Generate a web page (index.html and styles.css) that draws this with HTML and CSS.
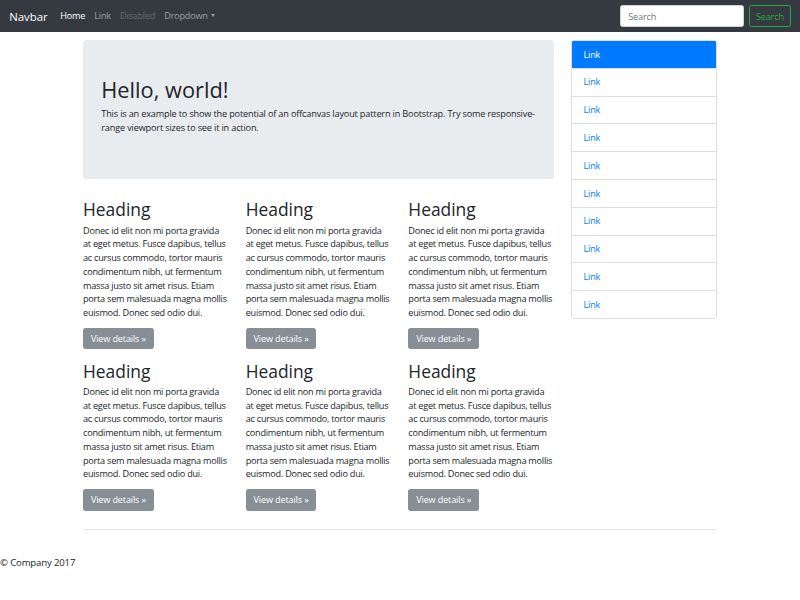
FILE: index.html
```html
<!DOCTYPE html>
<html lang="en">
<head>
<meta charset="utf-8">
<title>Off Canvas Template</title>
<link rel="stylesheet" href="styles.css">
</head>
<body>
<nav class="navbar">
  <a class="brand" href="#">Navbar</a>
  <ul class="nav">
    <li><a class="nav-link active" href="#">Home</a></li>
    <li><a class="nav-link" href="#">Link</a></li>
    <li><a class="nav-link disabled" href="#">Disabled</a></li>
    <li><a class="nav-link dropdown" href="#">Dropdown<span class="caret"></span></a></li>
  </ul>
  <form class="search">
    <input class="search-input" type="text" placeholder="Search">
    <button class="search-btn" type="button">Search</button>
  </form>
</nav>

<div class="container">
  <div class="row">
    <div class="main">
      <div class="jumbotron">
        <h1>Hello, world!</h1>
        <p>This is an example to show the potential of an offcanvas layout pattern in Bootstrap. Try some responsive-range viewport sizes to see it in action.</p>
      </div>
      <div class="cards">
        <div class="card"><h2>Heading</h2><p class="text">Donec id elit non mi porta gravida at eget metus. Fusce dapibus, tellus ac cursus commodo, tortor mauris condimentum nibh, ut fermentum massa justo sit amet risus. Etiam porta sem malesuada magna mollis euismod. Donec sed odio dui.</p><p class="action"><a class="btn" href="#">View details &raquo;</a></p></div>
        <div class="card"><h2>Heading</h2><p class="text">Donec id elit non mi porta gravida at eget metus. Fusce dapibus, tellus ac cursus commodo, tortor mauris condimentum nibh, ut fermentum massa justo sit amet risus. Etiam porta sem malesuada magna mollis euismod. Donec sed odio dui.</p><p class="action"><a class="btn" href="#">View details &raquo;</a></p></div>
        <div class="card"><h2>Heading</h2><p class="text">Donec id elit non mi porta gravida at eget metus. Fusce dapibus, tellus ac cursus commodo, tortor mauris condimentum nibh, ut fermentum massa justo sit amet risus. Etiam porta sem malesuada magna mollis euismod. Donec sed odio dui.</p><p class="action"><a class="btn" href="#">View details &raquo;</a></p></div>
        <div class="card"><h2>Heading</h2><p class="text">Donec id elit non mi porta gravida at eget metus. Fusce dapibus, tellus ac cursus commodo, tortor mauris condimentum nibh, ut fermentum massa justo sit amet risus. Etiam porta sem malesuada magna mollis euismod. Donec sed odio dui.</p><p class="action"><a class="btn" href="#">View details &raquo;</a></p></div>
        <div class="card"><h2>Heading</h2><p class="text">Donec id elit non mi porta gravida at eget metus. Fusce dapibus, tellus ac cursus commodo, tortor mauris condimentum nibh, ut fermentum massa justo sit amet risus. Etiam porta sem malesuada magna mollis euismod. Donec sed odio dui.</p><p class="action"><a class="btn" href="#">View details &raquo;</a></p></div>
        <div class="card"><h2>Heading</h2><p class="text">Donec id elit non mi porta gravida at eget metus. Fusce dapibus, tellus ac cursus commodo, tortor mauris condimentum nibh, ut fermentum massa justo sit amet risus. Etiam porta sem malesuada magna mollis euismod. Donec sed odio dui.</p><p class="action"><a class="btn" href="#">View details &raquo;</a></p></div>
      </div>
    </div>
    <div class="sidebar">
      <div class="list-group">
        <a href="#" class="list-item active">Link</a>
        <a href="#" class="list-item">Link</a>
        <a href="#" class="list-item">Link</a>
        <a href="#" class="list-item">Link</a>
        <a href="#" class="list-item">Link</a>
        <a href="#" class="list-item">Link</a>
        <a href="#" class="list-item">Link</a>
        <a href="#" class="list-item">Link</a>
        <a href="#" class="list-item">Link</a>
        <a href="#" class="list-item">Link</a>
      </div>
    </div>
  </div>
  <hr class="rule">
</div>

<footer class="footer">
  <p>&copy; Company 2017</p>
</footer>
</body>
</html>
```
FILE: styles.css
```css
* { box-sizing: border-box; }

html, body {
  margin: 0;
  padding: 0;
  background: #fff;
}

body {
  font-family: "Open Sans", "Noto Sans", sans-serif;
  font-size: 9.14px;
  line-height: 13.7px;
  letter-spacing: -0.16px;
  color: #212529;
}

a { text-decoration: none; }

/* Navbar */
.navbar {
  height: 32px;
  background: #343a40;
  display: flex;
  align-items: center;
  padding: 0 9.14px;
}

.brand {
  color: #fff;
  font-size: 11.4px;
  line-height: 17px;
  letter-spacing: 0;
  margin-right: 8px;
}

.nav {
  display: flex;
  list-style: none;
  margin: 0;
  padding: 0;
  flex: 1;
}

.nav-link {
  display: block;
  padding: 0 4.57px;
  color: rgba(255, 255, 255, 0.5);
  letter-spacing: -0.22px;
}

.nav-link.active { color: #fff; }
.nav-link.disabled { color: rgba(255, 255, 255, 0.25); }

.caret {
  display: inline-block;
  margin-left: 3px;
  vertical-align: 2px;
  border-top: 3px solid rgba(255, 255, 255, 0.5);
  border-left: 2.8px solid transparent;
  border-right: 2.8px solid transparent;
}

.search {
  display: flex;
  align-items: center;
  gap: 4.57px;
}

.search-input {
  width: 124px;
  height: 22px;
  border: 1px solid #ced4da;
  border-radius: 2.5px;
  padding: 0 6.9px;
  font-family: inherit;
  font-size: 9.14px;
  letter-spacing: -0.16px;
  color: #495057;
  background: #fff;
}

.search-input::placeholder { color: #6c757d; }

.search-btn {
  height: 22px;
  width: 42px;
  padding: 0;
  border: 1px solid #28a745;
  border-radius: 2.5px;
  background: transparent;
  color: #28a745;
  font-family: inherit;
  font-size: 9.14px;
  letter-spacing: -0.16px;
}

/* Layout */
.container {
  width: 634px;
  margin: 8px auto 0;
}

.row {
  display: flex;
  gap: 17px;
  align-items: flex-start;
}

.main { flex: 1; }

.sidebar { width: 146px; }

/* Jumbotron */
.jumbotron {
  background: #e9ecef;
  border-radius: 3px;
  padding: 36px 18.3px 35px;
  margin-bottom: 18.3px;
}

.jumbotron h1 {
  margin: 0 0 4px;
  font-size: 21.8px;
  line-height: 27.4px;
  font-weight: 400;
  letter-spacing: 0;
}

.jumbotron p {
  margin: 0 0 9.14px;
}

/* Cards */
.cards {
  display: grid;
  grid-template-columns: repeat(3, 1fr);
  column-gap: 17px;
}

.card h2 {
  margin: 0 0 2.57px;
  padding-top: 2px;
  font-size: 17.4px;
  line-height: 21.9px;
  font-weight: 400;
  letter-spacing: 0;
}

.card .text {
  margin: 0 0 8.14px;
  letter-spacing: -0.24px;
}

.card .action {
  margin: 0 0 9.14px;
}

.btn {
  display: inline-block;
  background: #868e96;
  color: #fff;
  border: 1px solid #868e96;
  border-radius: 2.3px;
  padding: 3px 6.9px;
  line-height: 13.7px;
}

/* Sidebar list */
.list-group {
  display: flex;
  flex-direction: column;
  border: 1px solid rgba(0, 0, 0, 0.125);
  border-radius: 2.3px;
  overflow: hidden;
}

.list-item {
  display: block;
  padding: 6.55px 11.4px;
  color: #007bff;
  background: #fff;
  border-top: 1px solid rgba(0, 0, 0, 0.125);
}

.list-item:first-child { border-top: 0; }

.list-item.active {
  background: #007bff;
  color: #fff;
}

/* Footer */
.rule {
  margin: 9.14px 0 8px;
  border: 0;
  border-top: 1px solid rgba(0, 0, 0, 0.1);
}

.footer p {
  margin: 0;
  padding-top: 18px;
  font-size: 9.6px;
}
```
